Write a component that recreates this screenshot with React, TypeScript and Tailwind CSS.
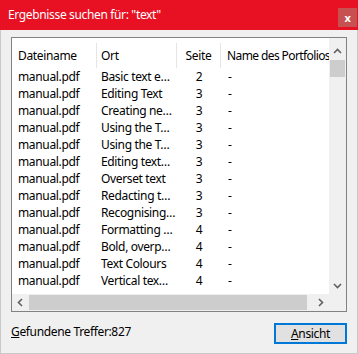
import React from "react";

interface IRow {
	file: string;
	place: string;
	page: number;
}

const rows: IRow[] = [
	{ file: "manual.pdf", place: "Basic text e…", page: 2 },
	{ file: "manual.pdf", place: "Editing Text", page: 3 },
	{ file: "manual.pdf", place: "Creating ne…", page: 3 },
	{ file: "manual.pdf", place: "Using the T…", page: 3 },
	{ file: "manual.pdf", place: "Using the T…", page: 3 },
	{ file: "manual.pdf", place: "Editing text…", page: 3 },
	{ file: "manual.pdf", place: "Overset text", page: 3 },
	{ file: "manual.pdf", place: "Redacting t…", page: 3 },
	{ file: "manual.pdf", place: "Recognising…", page: 3 },
	{ file: "manual.pdf", place: "Formatting …", page: 4 },
	{ file: "manual.pdf", place: "Bold, overp…", page: 4 },
	{ file: "manual.pdf", place: "Text Colours", page: 4 },
	{ file: "manual.pdf", place: "Vertical tex…", page: 4 },
];

function Chevron({ dir }: { dir: "up" | "down" | "left" | "right" }) {
	const points = {
		up: "1,6 4.5,2.5 8,6",
		down: "1,3 4.5,6.5 8,3",
		left: "6,1 2.5,4.5 6,8",
		right: "3,1 6.5,4.5 3,8",
	}[dir];
	return (
		<svg width="9" height="9" viewBox="0 0 9 9">
			<polyline points={points} fill="none" stroke="#606060" strokeWidth="1.6" />
		</svg>
	);
}

function ResultsList() {
	return (
		<div className="flex flex-col h-[275px] border border-[#828282] bg-white">
			<div className="flex flex-1 min-h-0">
				<div className="flex-1 min-w-0 overflow-hidden pt-[5px]">
					<div className="flex h-[25px] items-center whitespace-nowrap">
						<div className="w-[85px] h-full flex items-center pl-[6px] border-r border-[#e5e5e5] shrink-0">
							Dateiname
						</div>
						<div className="w-[80px] h-full flex items-center pl-[4px] border-r border-[#e5e5e5] shrink-0">
							Ort
						</div>
						<div className="w-[44px] h-full flex items-center justify-center border-r border-[#e5e5e5] shrink-0">
							Seite
						</div>
						<div className="h-full flex items-center pl-[6px] shrink-0 tracking-[-0.6px]">
							Name des Portfolios
						</div>
					</div>
					{rows.map((row, i) => (
						<div key={i} className="flex h-[17px] items-center whitespace-nowrap">
							<div className="w-[85px] pl-[6px] shrink-0">{row.file}</div>
							<div className="w-[80px] pl-[4px] shrink-0">{row.place}</div>
							<div className="w-[44px] text-center shrink-0">{row.page}</div>
							<div className="pl-[7px] shrink-0">-</div>
						</div>
					))}
				</div>
				<div className="w-[17px] flex flex-col bg-[#f0f0f0] pt-[5px] shrink-0">
					<div className="h-[17px] flex items-center justify-center">
						<Chevron dir="up" />
					</div>
					<div className="h-[17px] bg-[#cdcdcd] mx-[1px]" />
					<div className="flex-1" />
					<div className="h-[17px] flex items-center justify-center">
						<Chevron dir="down" />
					</div>
				</div>
			</div>
			<div className="flex h-[17px] bg-[#f0f0f0]">
				<div className="w-[17px] flex items-center justify-center">
					<Chevron dir="left" />
				</div>
				<div className="w-[278px] bg-[#cdcdcd] my-[1px]" />
				<div className="flex-1" />
				<div className="w-[17px] flex items-center justify-center">
					<Chevron dir="right" />
				</div>
				<div className="w-[17px]" />
			</div>
		</div>
	);
}

export default function App() {
	return (
		<div
			className="w-[358px] h-[354px] flex flex-col text-[12px] leading-[16px] tracking-[-0.35px] text-black"
			style={{ fontFamily: '"Noto Sans", "Open Sans", sans-serif' }}
		>
			<div className="h-[30px] bg-[#e81123] flex items-start justify-between shrink-0">
				<span className="text-white pl-[8px] pt-[7px]">Ergebnisse suchen für: "text"</span>
				<button className="w-[19px] h-[19px] mt-[8px] mr-[1px] bg-[#c75050] text-white text-[11px] font-bold leading-[17px] flex items-center justify-center">
					x
				</button>
			</div>
			<div className="flex-1 bg-[#f0f0f0] border-x border-b border-[#c9c9c9] px-[10px] pt-[7px]">
				<ResultsList />
				<div className="flex justify-between mt-[11px] h-[21px]">
					<span className="pt-[1px]">
						<span className="underline">G</span>efundene Treffer:827
					</span>
					<button className="w-[73px] h-[21px] border-2 border-[#0078d7] bg-[#e1e1e1] flex items-center justify-center">
						<span>
							<span className="underline">A</span>nsicht
						</span>
					</button>
				</div>
			</div>
		</div>
	);
}
